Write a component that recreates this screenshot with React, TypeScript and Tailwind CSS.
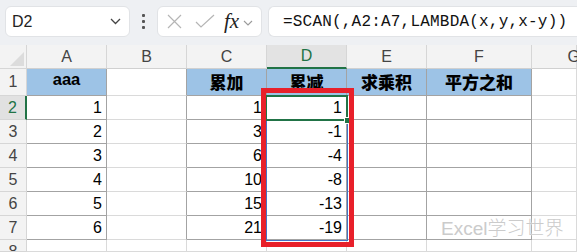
import React from "react";

const COLS = ["A", "B", "C", "D", "E", "F", "G"];
const ROW_H = ["h-[27px]", "h-[24px]", "h-[24px]", "h-[24px]", "h-[24px]", "h-[24px]", "h-[24px]", "h-[12px]"];

const data: Record<string, string> = {
  "1-0": "aaa",
  "1-2": "累加",
  "1-3": "累减",
  "1-4": "求乘积",
  "1-5": "平方之和",
};
const A = [1, 2, 3, 4, 5, 6];
const C = [1, 3, 6, 10, 15, 21];
const D = [1, -1, -4, -8, -13, -19];
A.forEach((v, i) => (data[`${i + 2}-0`] = String(v)));
C.forEach((v, i) => (data[`${i + 2}-2`] = String(v)));
D.forEach((v, i) => (data[`${i + 2}-3`] = String(v)));

const bordered = (r: number, c: number) => r >= 1 && r <= 7 && (c === 0 || (c >= 2 && c <= 5));
const isBlue = (r: number, c: number) => r === 1 && (c === 0 || (c >= 2 && c <= 5));

function Cell({ r, c }: { r: number; c: number }) {
  const rightDark = bordered(r, c) || bordered(r, c + 1);
  const bottomDark = bordered(r, c) || bordered(r + 1, c);
  const txt = data[`${r}-${c}`];
  return (
    <div
      className={[
        "box-border border-r border-b flex overflow-hidden whitespace-nowrap",
        ROW_H[r - 1],
        rightDark ? "border-r-[#a3a3a3]" : "border-r-[#dadada]",
        bottomDark ? "border-b-[#a3a3a3]" : "border-b-[#dadada]",
        isBlue(r, c) ? "bg-[#9dc3e6]" : "bg-white",
        r === 1
          ? c === 0
            ? "justify-center items-end pb-[3px] font-bold text-[16.5px] text-black [font-family:'Liberation_Sans',sans-serif]"
            : "justify-center items-end pb-[1px] font-black text-[17px] text-black [font-family:'Noto_Sans_CJK_SC',sans-serif]"
          : "justify-end items-center pr-[4px] text-[16px] text-black [font-family:'Liberation_Sans',sans-serif]",
      ].join(" ")}
    >
      {txt}
    </div>
  );
}

function Toolbar() {
  return (
    <div className="h-[45px] bg-[#eef0f3] flex items-start pt-[6px] pl-[5px] overflow-hidden">
      <div className="w-[125px] h-[31px] shrink-0 rounded-[6px] border border-[#e1e3e6] bg-white flex items-center justify-between pl-[6px] pr-[8px]">
        <span className="text-[16px] text-[#222] [font-family:'Liberation_Sans',sans-serif]">D2</span>
        <svg width="11" height="7" viewBox="0 0 11 7" fill="none">
          <path d="M1 1l4.5 4.5L10 1" stroke="#444" strokeWidth="1.3" />
        </svg>
      </div>
      <div className="w-[27px] h-[31px] shrink-0 flex flex-col items-center justify-center gap-[3px]">
        <div className="w-[3px] h-[3px] bg-[#555] rounded-[1px]" />
        <div className="w-[3px] h-[3px] bg-[#555] rounded-[1px]" />
        <div className="w-[3px] h-[3px] bg-[#555] rounded-[1px]" />
      </div>
      <div className="w-[105px] h-[31px] shrink-0 rounded-[6px] border border-[#e1e3e6] bg-white flex items-center pl-[9px]">
        <svg width="15" height="15" viewBox="0 0 15 15" fill="none">
          <path d="M1 1l13 13M14 1L1 14" stroke="#b5b5b5" strokeWidth="1.2" />
        </svg>
        <svg width="20" height="15" viewBox="0 0 20 15" fill="none" className="ml-[13px]">
          <path d="M1 8l5 5L19 1" stroke="#b5b5b5" strokeWidth="1.2" />
        </svg>
        <span className="ml-[9px] italic text-[21px] leading-none text-[#222] [font-family:'Liberation_Serif',serif]">fx</span>
        <svg width="10" height="6" viewBox="0 0 10 6" fill="none" className="ml-[4px] mt-[2px]">
          <path d="M1 1l4 4 4-4" stroke="#9a9a9a" strokeWidth="1.1" />
        </svg>
      </div>
      <div className="ml-[6px] flex-1 min-w-[320px] h-[31px] rounded-l-[6px] border border-r-0 border-[#e1e3e6] bg-white flex items-center pl-[14px] whitespace-nowrap">
        <span className="text-[16px] tracking-[0.2px] text-[#111] [font-family:'Liberation_Mono',monospace]">
          =SCAN(,A2:A7,LAMBDA(x,y,x-y))
        </span>
      </div>
    </div>
  );
}

function Grid() {
  return (
    <div className="relative grid grid-cols-[27px_80px_80px_80px_80px_80px_105px_1fr] bg-white">
      <div className="h-[24px] box-border border-r border-b border-r-[#d6d6d6] border-b-[#d6d6d6] bg-[#f3f3f3] relative">
        <div className="absolute right-[2px] bottom-[2px] w-0 h-0 border-l-[14px] border-l-transparent border-b-[14px] border-b-[#dcdcdc]" />
      </div>
      {COLS.map((c, i) =>
        c === "D" ? (
          <div
            key={c}
            className="h-[24px] box-border border-r border-r-[#d6d6d6] border-b-2 border-b-[#217346] bg-[#e3e3e3] flex items-center justify-center text-[16px] text-[#217346] [font-family:'Liberation_Sans',sans-serif]"
          >
            {c}
          </div>
        ) : (
          <div
            key={c}
            className={[
              "h-[24px] box-border border-r border-b border-r-[#d6d6d6] border-b-[#d0d0d0] bg-[#f3f3f3] flex items-center justify-center text-[16px] text-[#444] [font-family:'Liberation_Sans',sans-serif]",
              i === 6 ? "justify-end pr-[0px]" : "",
            ].join(" ")}
          >
            {i === 6 ? <span className="-mr-[4px]">{c}</span> : c}
          </div>
        )
      )}
      {[1, 2, 3, 4, 5, 6, 7, 8].map((r) => (
        <React.Fragment key={r}>
          {r === 2 ? (
            <div className="h-[24px] box-border border-r-2 border-r-[#217346] border-b border-b-[#d6d6d6] bg-[#e1e1e1] flex items-center justify-center text-[16px] text-[#217346] [font-family:'Liberation_Sans',sans-serif]">
              {r}
            </div>
          ) : (
            <div
              className={[
                "box-border border-r border-b border-r-[#d6d6d6] border-b-[#d6d6d6] bg-[#f3f3f3] flex items-center justify-center text-[16px] text-[#444] [font-family:'Liberation_Sans',sans-serif] overflow-hidden",
                ROW_H[r - 1],
                r === 8 ? "items-start" : "",
              ].join(" ")}
            >
              {r}
            </div>
          )}
          {COLS.map((_, c) => (
            <Cell key={c} r={r} c={c} />
          ))}
        </React.Fragment>
      ))}

      <div className="absolute left-[266px] top-[51px] w-[82px] h-[145px] border border-[#4472c4] pointer-events-none" />
      <div className="absolute left-[265px] top-[50px] w-[83px] h-[26px] border-2 border-[#217346] pointer-events-none" />
      <div className="absolute left-[344px] top-[72px] w-[7px] h-[7px] bg-[#217346] border border-white pointer-events-none" />
      <div className="absolute left-[261px] top-[43px] w-[93px] h-[159px] border-[5px] border-[#e8202a] pointer-events-none" />
      <div className="absolute left-[441px] top-[174px] text-[19px] leading-none text-[#cbcbcb] [text-shadow:0_0_1px_#fff,0_0_2px_#fff] [font-family:'Liberation_Sans','Noto_Sans_CJK_SC',sans-serif] font-light whitespace-nowrap pointer-events-none">
        Excel学习世界
      </div>
    </div>
  );
}

export default function App() {
  return (
    <div className="w-[577px] h-[252px] overflow-hidden bg-white">
      <Toolbar />
      <Grid />
    </div>
  );
}
